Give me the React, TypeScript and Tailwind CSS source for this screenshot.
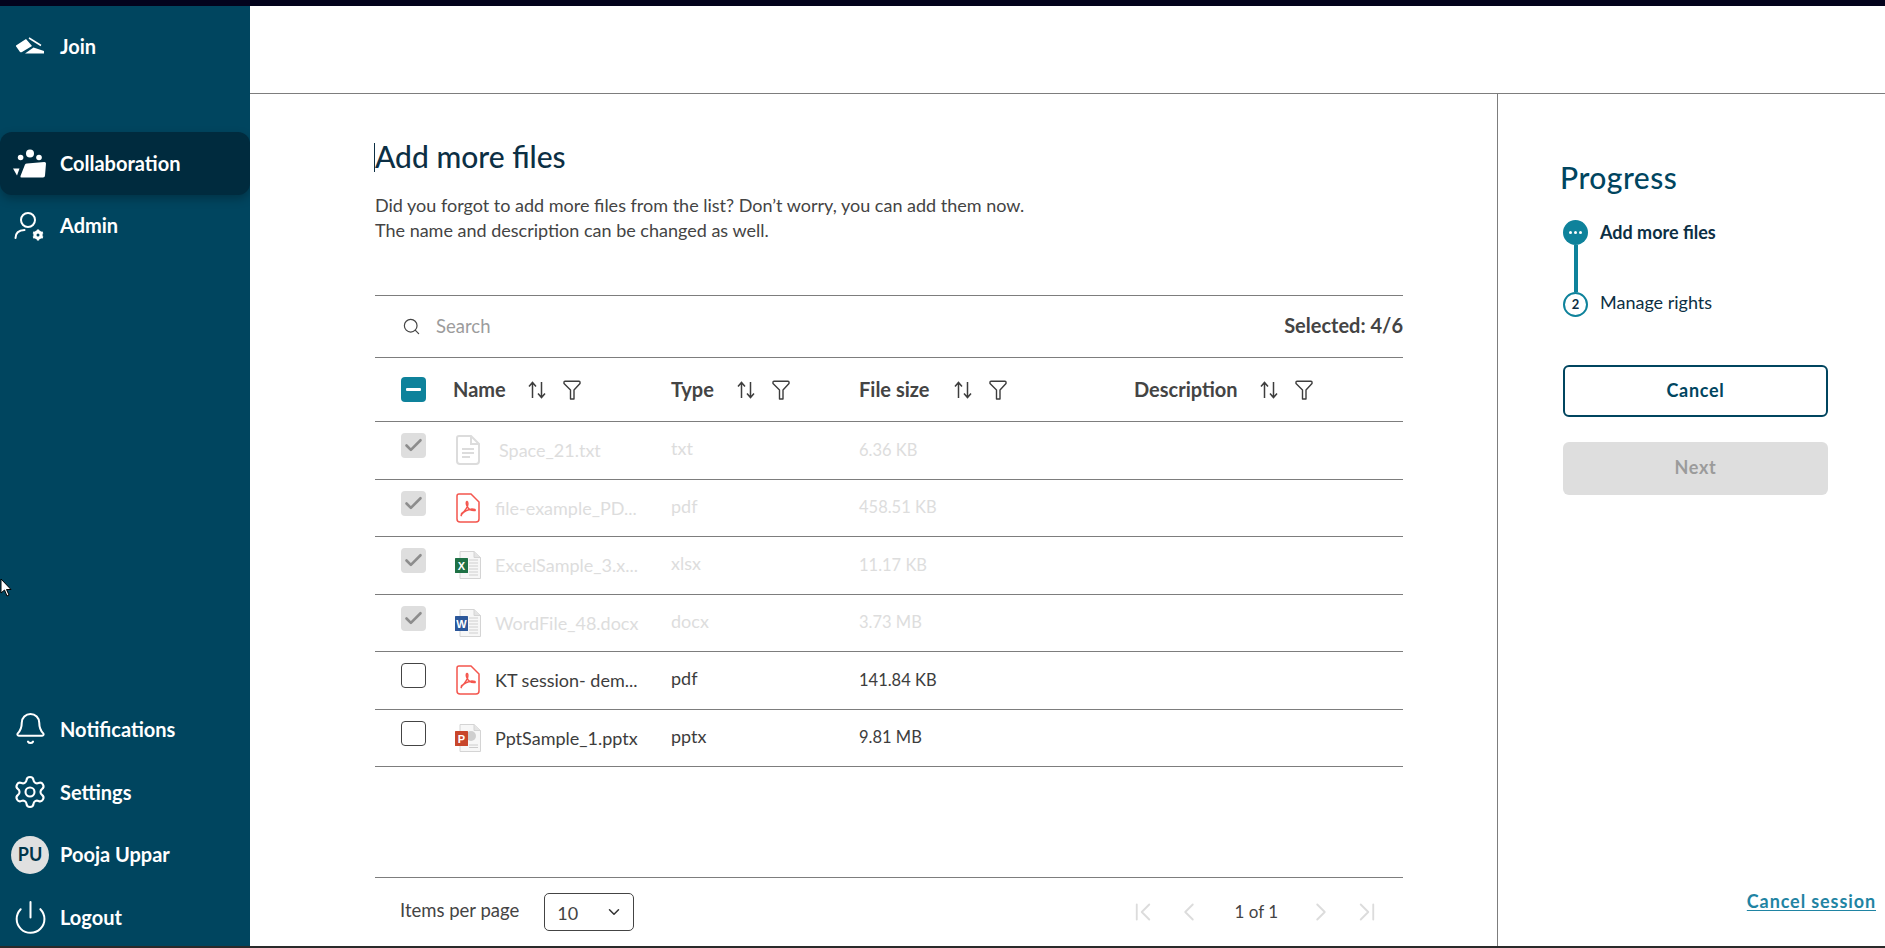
import { Bell, Check, ChevronDown, ChevronFirst, ChevronLast, ChevronLeft, ChevronRight, Power, Search, Settings } from 'lucide-react'
import type { ReactNode } from 'react'

const font = { fontFamily: 'Lato, "Noto Sans", sans-serif' }

function JoinIcon() {
  return (
    <svg width="30" height="20" viewBox="0 0 30 20" fill="white">
      <path d="M1 9.5 L11 3 L17 10 L7 16 Q6 16.500 5 16 L1.500 11 Q0.600 10.200 1 9.500Z" />
      <path d="M14 2 L26 9.500" stroke="white" strokeWidth="1.500" />
      <path d="M10 17.500 L18.500 11.500 L29 15 V17.500Z" />
    </svg>
  )
}

function CollabIcon() {
  return (
    <svg width="34" height="30" viewBox="0 0 34 30" fill="white">
      <circle cx="7.600" cy="8.500" r="2.800" />
      <circle cx="17" cy="4.500" r="4" />
      <circle cx="26" cy="8.500" r="2.800" />
      <path d="M0 19.500 H6.500 L4 26.500Z" />
      <path d="M12 15.500 Q12.500 14.500 14 14.500 L31.500 13 Q33 13 33 14.500 L32 26.500 Q32 28.500 30 28.500 H8.500 Q7 28.500 7.500 27Z" />
    </svg>
  )
}

function AdminIcon() {
  return (
    <svg width="32" height="32" viewBox="0 0 32 32" fill="none" stroke="white" strokeWidth="2">
      <circle cx="14" cy="11" r="7" />
      <path d="M1.500 29 Q1.500 21.500 10.500 21" strokeLinecap="round" />
      <circle cx="24" cy="26" r="3.200" strokeWidth="3" />
      <path d="M24 20.500 V31.500 M19.200 23.200 L28.800 28.800 M19.200 28.800 L28.800 23.200" strokeWidth="2.200" />
      <circle cx="24" cy="26" r="1.500" fill="#00455f" stroke="none" />
    </svg>
  )
}

function SortIcon() {
  return (
    <svg width="20" height="20" viewBox="0 0 20 20" fill="none" stroke="#3d3d3d" strokeWidth="1.500" className="shrink-0">
      <path d="M5.500 18 V3 M2 6.500 L5.500 2.500 L9 6.500" />
      <path d="M14.500 2 V17 M11 13.500 L14.500 17.500 L18 13.500" />
    </svg>
  )
}

function FilterIcon() {
  return (
    <svg width="18" height="20" viewBox="0 0 18 20" fill="none" stroke="#3d3d3d" strokeWidth="1.400" strokeLinejoin="round" className="shrink-0">
      <path d="M1 2 Q1 1.200 2 1.200 H16 Q17 1.200 17 2 V3.500 L11 10 V19 H7.500 V10 L1 3.500Z" />
    </svg>
  )
}

function TxtIcon() {
  return (
    <svg width="24" height="30" viewBox="0 0 24 30" fill="none" stroke="#dcdcdc" strokeWidth="2">
      <path d="M3 1 H15 L23 9 V26 Q23 29 20 29 H4 Q1 29 1 26 V3 Q1 1 3 1Z" />
      <path d="M15 1 V9 H23" />
      <path d="M6 14 H18 M6 18 H18 M6 22 H14" />
    </svg>
  )
}

function PdfIcon() {
  return (
    <svg width="24" height="30" viewBox="0 0 24 30" fill="none" stroke="#f4564e">
      <path d="M3 1 H15 L23 9 V26 Q23 29 20 29 H4 Q1 29 1 26 V3 Q1 1 3 1Z" strokeWidth="1.500" />
      <path d="M5 21 Q9 19 11.500 13 Q12.500 9 11 8.500 Q9.500 9 11 13 Q13 18 19 17.500 Q20 16 16 16 Q9 17 5.500 21.500 Q4.500 23 6 22.500" strokeWidth="1.500" />
    </svg>
  )
}

function OfficeIcon({ color, letter }: { color: string; letter: string }) {
  return (
    <svg width="26" height="28" viewBox="0 0 26 28" fill="none">
      <path d="M5 0.500 H19 L25.500 6.500 V27.500 H5Z" fill="#f7f7f7" stroke="#d4d4d4" />
      <path d="M19 0.500 V6.500 H25.500" fill="#e4e4e4" stroke="#d4d4d4" />
      {letter === 'P' ? (
        <>
          <circle cx="16" cy="12" r="5" fill="#cfcfcf" />
          <path d="M14 21 H23 M14 23.500 H23" stroke="#cccccc" />
        </>
      ) : (
        <path d="M14 9 H23 M14 12 H23 M14 15 H23 M14 18 H23 M14 21 H23 M14 24 H23" stroke="#cfcfcf" />
      )}
      <rect x="0" y="7" width="13" height="15" rx="0.500" fill={color} />
      <text x="6.500" y="18.600" textAnchor="middle" fontSize="11" fontWeight="700" fill="white" fontFamily="Liberation Sans, sans-serif">
        {letter}
      </text>
    </svg>
  )
}

function NavItem({ icon, label, className, textClass }: { icon: ReactNode; label: string; className?: string; textClass?: string }) {
  return (
    <div className={`flex items-center ${className ?? ''}`}>
      <div className="w-[60px] flex justify-center shrink-0">{icon}</div>
      <span className={`text-[20px] font-bold text-white ${textClass ?? ''}`}>{label}</span>
    </div>
  )
}

function HeaderCell({ label, width, gap }: { label: string; width: string; gap: string }) {
  return (
    <div className={`flex items-center ${width}`}>
      <span className="text-[20px] font-bold text-[#444] -mt-[2px]">{label}</span>
      <div className={`flex items-center gap-[16px] ${gap}`}>
        <SortIcon />
        <FilterIcon />
      </div>
    </div>
  )
}

interface FileRow {
  name: string
  type: string
  size: string
  icon: ReactNode
  done: boolean
  namePad?: string
}

const files: FileRow[] = [
  { name: 'Space_21.txt', type: 'txt', size: '6.36 KB', icon: <TxtIcon />, done: true, namePad: 'ml-[18px]' },
  { name: 'file-example_PD...', type: 'pdf', size: '458.51 KB', icon: <PdfIcon />, done: true },
  { name: 'ExcelSample_3.x...', type: 'xlsx', size: '11.17 KB', icon: <OfficeIcon color="#1e7145" letter="X" />, done: true },
  { name: 'WordFile_48.docx', type: 'docx', size: '3.73 MB', icon: <OfficeIcon color="#2b579a" letter="W" />, done: true },
  { name: 'KT session- dem...', type: 'pdf', size: '141.84 KB', icon: <PdfIcon />, done: false },
  { name: 'PptSample_1.pptx', type: 'pptx', size: '9.81 MB', icon: <OfficeIcon color="#c8462b" letter="P" />, done: false },
]

function Row({ file }: { file: FileRow }) {
  const text = file.done ? 'text-[#dddddd]' : 'text-[#3d3d3d]'
  return (
    <div className="flex h-[57.5px] items-center border-b border-[#7d7d7d]">
      <div className="w-[78px] pl-[26px] self-start pt-[11px]">
        {file.done ? (
          <div className="w-[25px] h-[25px] rounded-[4px] bg-[#dedede] flex items-center justify-center">
            <Check size={21} strokeWidth={3} className="text-[#8d8d8d]" />
          </div>
        ) : (
          <div className="w-[25px] h-[25px] rounded-[4px] border border-[#444] bg-white" />
        )}
      </div>
      <div className="w-[218px] flex items-center">
        <div className="w-[26px] ml-[2px] flex justify-center shrink-0">{file.icon}</div>
        <span className={`text-[18px] ml-[14px] whitespace-nowrap mt-[1px] ${file.namePad ?? ''} ${text}`}>{file.name}</span>
      </div>
      <span className={`w-[188px] text-[18px] -mt-[3px] ${text}`}>{file.type}</span>
      <span className={`text-[16.500px] ${text}`}>{file.size}</span>
    </div>
  )
}

export default function App() {
  return (
    <div className="relative w-[1885px] h-[948px] overflow-hidden flex flex-col bg-white" style={font}>
      <div className="h-[6px] bg-[#03031c] shrink-0" />
      <div className="flex flex-1 min-h-0">
        {/* Sidebar */}
        <aside className="w-[250px] shrink-0 bg-[#00455f] flex flex-col justify-between overflow-hidden">
          <div className="pt-[9px]">
            <NavItem icon={<JoinIcon />} label="Join" className="h-[62px]" />
            <NavItem
              icon={<CollabIcon />}
              label="Collaboration"
              textClass="-mt-[2px]"
              className="h-[63px] mt-[55px] bg-[#002b3e] rounded-xl shadow-[0_4px_10px_rgba(0,0,0,0.25)]"
            />
            <NavItem icon={<AdminIcon />} label="Admin" className="h-[60px]" />
          </div>
          <div className="-mb-[3px]">
            <NavItem icon={<Bell size={35} strokeWidth={1.400} className="text-white" />} label="Notifications" className="h-[63px]" />
            <NavItem icon={<Settings size={36} strokeWidth={1.400} className="text-white" />} label="Settings" className="h-[63px]" />
            <NavItem
              icon={
                <div className="w-[38px] h-[38px] rounded-full bg-[#e0e0e0] flex items-center justify-center text-[18px] font-bold text-[#00354a]">
                  PU
                </div>
              }
              label="Pooja Uppar"
              textClass="-mt-[2px]"
              className="h-[63px]"
            />
            <NavItem icon={<Power size={37} strokeWidth={1.300} className="text-white" />} label="Logout" textClass="-mt-[2px]" className="h-[63px]" />
          </div>
        </aside>

        <div className="flex-1 flex flex-col min-w-0">
          <div className="h-[88px] shrink-0 border-b border-[#7d7d7d]" />
          <div className="flex flex-1 min-h-0">
            {/* Main column */}
            <main className="w-[1248px] shrink-0 border-r border-[#7d7d7d] pl-[125px] flex flex-col">
              <div className="w-[1028px] flex-1 flex flex-col">
                <h1 className="mt-[37px] h-[50px] flex items-center text-[30px] font-medium text-[#0c2f44]">Add more files</h1>
                <p className="mt-[12px] text-[18px] leading-[25px] text-[#444]">
                  Did you forgot to add more files from the list? Don’t worry, you can add them now.
                  <br />
                  The name and description can be changed as well.
                </p>

                <div className="mt-[52px] h-[63px] border-y border-[#7d7d7d] flex items-center justify-between">
                  <div className="flex items-center pl-[27px]">
                    <Search size={19} strokeWidth={1.500} className="text-[#444]" />
                    <span className="ml-[15px] text-[18.500px] text-[#9c9c9c]">Search</span>
                  </div>
                  <span className="text-[20px] font-bold text-[#444] -mt-[4px]">Selected: 4/6</span>
                </div>

                <div className="h-[64px] border-b border-[#7d7d7d] flex items-center">
                  <div className="w-[78px] pl-[26px]">
                    <div className="w-[25px] h-[25px] rounded-[4px] bg-[#0e829b] flex items-center justify-center">
                      <div className="w-[15px] h-[3px] bg-white rounded-[1px]" />
                    </div>
                  </div>
                  <HeaderCell label="Name" width="w-[218px]" gap="ml-[21px]" />
                  <HeaderCell label="Type" width="w-[188px]" gap="ml-[22px]" />
                  <HeaderCell label="File size" width="w-[275px]" gap="ml-[24px]" />
                  <HeaderCell label="Description" width="" gap="ml-[21px]" />
                </div>

                {files.map((file) => (
                  <Row key={file.name} file={file} />
                ))}

                <div className="mt-auto h-[69px] border-t border-[#7d7d7d] flex items-center pl-[25px] pr-[21px]">
                  <span className="text-[18.500px] text-[#444] -mt-[2px]">Items per page</span>
                  <div className="ml-[25px] w-[90px] h-[38px] border border-[#444] rounded-[5px] flex items-center justify-between pl-[12px] pr-[10px]">
                    <span className="text-[18px] text-[#444] mt-[2px]">10</span>
                    <ChevronDown size={18} strokeWidth={2} className="text-[#333]" />
                  </div>
                  <div className="ml-auto flex items-center text-[#dcdcdc]">
                    <ChevronFirst size={30} strokeWidth={1.500} />
                    <ChevronLeft size={30} strokeWidth={1.500} className="ml-[16px]" />
                    <span className="text-[17px] text-[#444] ml-[30px] mr-[28px]">1 of 1</span>
                    <ChevronRight size={30} strokeWidth={1.500} />
                    <ChevronLast size={30} strokeWidth={1.500} className="ml-[16px]" />
                  </div>
                </div>
              </div>
            </main>

            {/* Progress */}
            <section className="flex-1 flex flex-col pl-[62px]">
              <h2 className="mt-[63px] h-[40px] flex items-center text-[30px] font-medium tracking-[0.5px] text-[#00455f]">Progress</h2>
              <div className="mt-[23px] ml-[3px] flex">
                <div className="w-[25px] flex flex-col items-center">
                  <div className="w-[25px] h-[25px] rounded-full bg-[#0e829b] flex items-center justify-center gap-[2px]">
                    <span className="w-[3px] h-[3px] rounded-full bg-white" />
                    <span className="w-[3px] h-[3px] rounded-full bg-white" />
                    <span className="w-[3px] h-[3px] rounded-full bg-white" />
                  </div>
                  <div className="w-[4px] h-[47px] bg-[#0e829b]" />
                  <div className="w-[25px] h-[25px] rounded-full border-2 border-[#0e829b] flex items-center justify-center text-[13px] font-bold text-[#0c2f44]">
                    2
                  </div>
                </div>
                <div className="ml-[12px] flex flex-col justify-between">
                  <span className="h-[25px] flex items-center text-[18px] font-bold text-[#0c2f44]">Add more files</span>
                  <span className="h-[25px] flex items-center text-[18px] text-[#0c2f44] -mt-[2px] mb-[2px]">Manage rights</span>
                </div>
              </div>
              <button className="mt-[48px] ml-[3px] w-[265px] h-[52px] pb-[2px] border-2 border-[#00455f] rounded-[6px] text-[18px] font-bold tracking-[0.7px] text-[#00455f]">
                Cancel
              </button>
              <button className="mt-[25px] ml-[3px] w-[265px] h-[53px] pb-[2px] bg-[#dedede] rounded-[6px] text-[18px] font-bold tracking-[0.7px] text-[#9b9b9b]">
                Next
              </button>
              <a className="mt-auto mb-[31px] mr-[9px] self-end text-[18px] font-bold tracking-[0.9px] text-[#1f84a3] underline underline-offset-2">
                Cancel session
              </a>
            </section>
          </div>
        </div>
      </div>
      <div className="h-[2px] bg-[#2a2a2a] shrink-0" />

      {/* text caret in the title */}
      <div className="absolute left-[374px] top-[143px] w-px h-[29px] bg-[#0c2f44]" />
      {/* mouse pointer */}
      <svg className="absolute left-0 top-[578px]" width="12" height="20" viewBox="0 0 12 20">
        <path d="M1 1 V15 L4.500 12 L7 18 L9 17 L6.500 11.500 H11Z" fill="white" stroke="black" strokeWidth="1" />
      </svg>
    </div>
  )
}
